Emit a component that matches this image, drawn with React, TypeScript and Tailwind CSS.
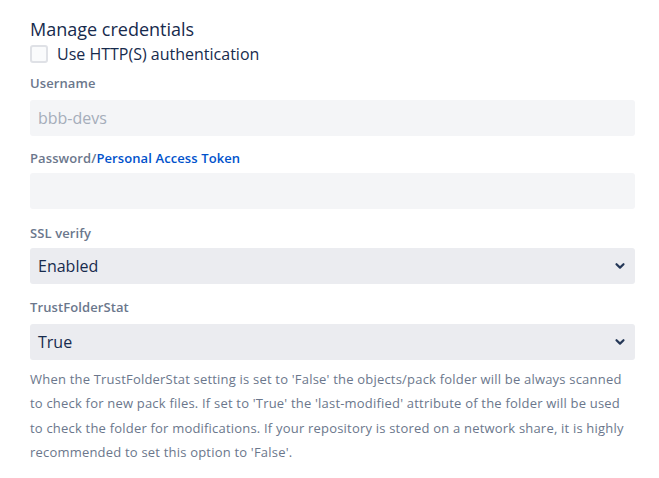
import React from "react";

function Chevron() {
  return (
    <svg width="12" height="12" viewBox="0 0 12 12" className="absolute right-[9px] top-1/2 -translate-y-1/2">
      <path d="M2.5 4.2 L6 7.6 L9.5 4.2" fill="none" stroke="#253858" strokeWidth="2.2" strokeLinecap="round" strokeLinejoin="round" />
    </svg>
  );
}

function Select({ value }: { value: string }) {
  return (
    <div className="relative h-[36px] w-full rounded-[3px] bg-[#ebecf0] flex items-center px-[8px] text-[16px] text-[#172b4d]">
      {value}
      <Chevron />
    </div>
  );
}

export default function App() {
  return (
    <div className="w-[659px] h-[478px] bg-white pl-[30px] pr-[24px] pt-[17px] font-['Segoe_UI','Open_Sans',sans-serif]">
      <div className="text-[18px] leading-[24px] text-[#172b4d]">Manage credentials</div>
      <label className="flex items-center gap-[9px] mt-[2px]">
        <span className="w-[18px] h-[18px] rounded-[3px] border-2 border-[#dfe1e6] bg-[#fafbfc]" />
        <span className="text-[16px] leading-[22px] text-[#172b4d]">Use HTTP(S) authentication</span>
      </label>
      <div className="mt-[10px] text-[13px] leading-[16px] font-semibold tracking-[0.1px] text-[#6b778c]">Username</div>
      <div className="mt-[9px] h-[36px] rounded-[3px] bg-[#f4f5f7] flex items-center px-[8px] text-[16px] text-[#a5adba]">bbb-devs</div>
      <div className="mt-[14px] text-[13px] leading-[16px] font-semibold tracking-[0.1px] text-[#6b778c]">
        Password/<span className="text-[#0052cc]">Personal Access Token</span>
      </div>
      <div className="mt-[7px] h-[36px] rounded-[3px] bg-[#f4f5f7]" />
      <div className="mt-[16px] text-[13px] leading-[16px] font-semibold tracking-[0.1px] text-[#6b778c]">SSL verify</div>
      <div className="mt-[7px]"><Select value="Enabled" /></div>
      <div className="mt-[15px] text-[13px] leading-[16px] font-semibold tracking-[0.1px] text-[#6b778c]">TrustFolderStat</div>
      <div className="mt-[9px]"><Select value="True" /></div>
      <p className="mt-[7px] text-[13px] leading-[24.3px] text-[#6b778c] tracking-[0.2px] pr-[10px]">
        When the TrustFolderStat setting is set to 'False' the objects/pack folder will be always scanned to check for new pack files. If set to 'True' the 'last-modified' attribute of the folder will be used to check the folder for modifications. If your repository is stored on a network share, it is highly recommended to set this option to 'False'.
      </p>
    </div>
  );
}
